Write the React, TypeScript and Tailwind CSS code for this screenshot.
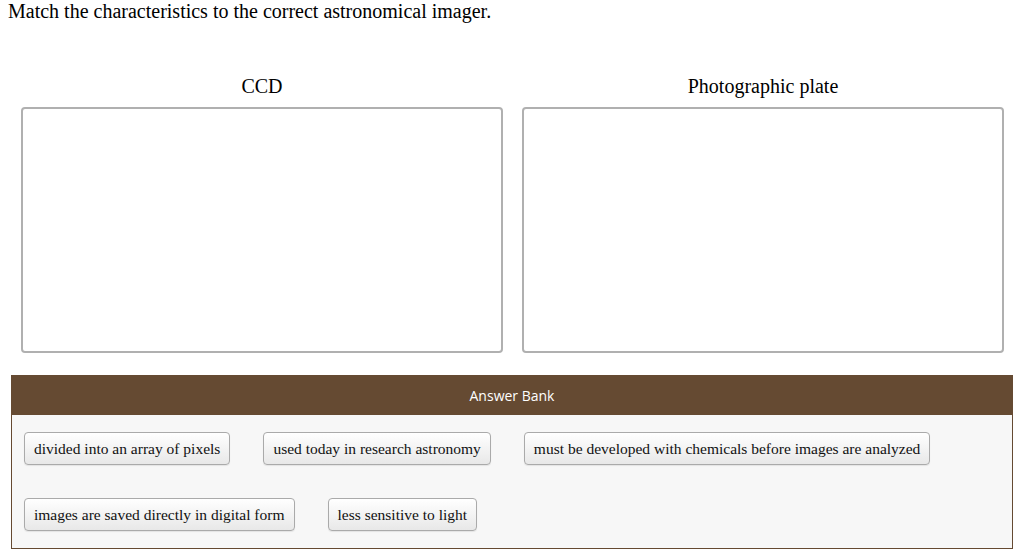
const columns = ['CCD', 'Photographic plate'];

const answers = [
  'divided into an array of pixels',
  'used today in research astronomy',
  'must be developed with chemicals before images are analyzed',
  'images are saved directly in digital form',
  'less sensitive to light',
];

function Chip({ label }: { label: string }) {
  return (
    <div className="h-[33px] px-[9px] flex items-center rounded-[4px] border border-[#aaaaaa] bg-gradient-to-b from-white to-[#e8e8e8] text-[15.5px] text-[#111] font-['Liberation_Serif',serif] shadow-[0_1px_1px_rgba(0,0,0,0.08)] cursor-move">
      {label}
    </div>
  );
}

export default function App() {
  return (
    <div className="w-[1024px] h-[560px] bg-white overflow-hidden font-['Liberation_Serif',serif] text-black">
      <h1 className="pl-[8px] pt-[0px] text-[20px] leading-[22px]">
        Match the characteristics to the correct astronomical imager.
      </h1>

      <div className="mt-[53px] pl-[21px] pr-[20px] grid grid-cols-2 gap-[19px]">
        {columns.map((name) => (
          <div key={name} className="flex flex-col">
            <div className="text-center text-[20px] leading-[22px]">{name}</div>
            <div className="mt-[10px] h-[246px] rounded-[4px] border-2 border-[#b0b0b0] bg-white" />
          </div>
        ))}
      </div>

      <div className="mt-[22px] ml-[11px] w-[1002px] border border-[#654a32]">
        <div className="h-[39px] bg-[#654a32] flex items-center justify-center text-white text-[14px] font-['Open_Sans',sans-serif]">
          Answer Bank
        </div>
        <div className="h-[133px] bg-[#f7f7f7] px-[12px] pt-[17px] flex flex-wrap content-start gap-x-[33px] gap-y-[33px]">
          {answers.map((a) => (
            <Chip key={a} label={a} />
          ))}
        </div>
      </div>
    </div>
  );
}
